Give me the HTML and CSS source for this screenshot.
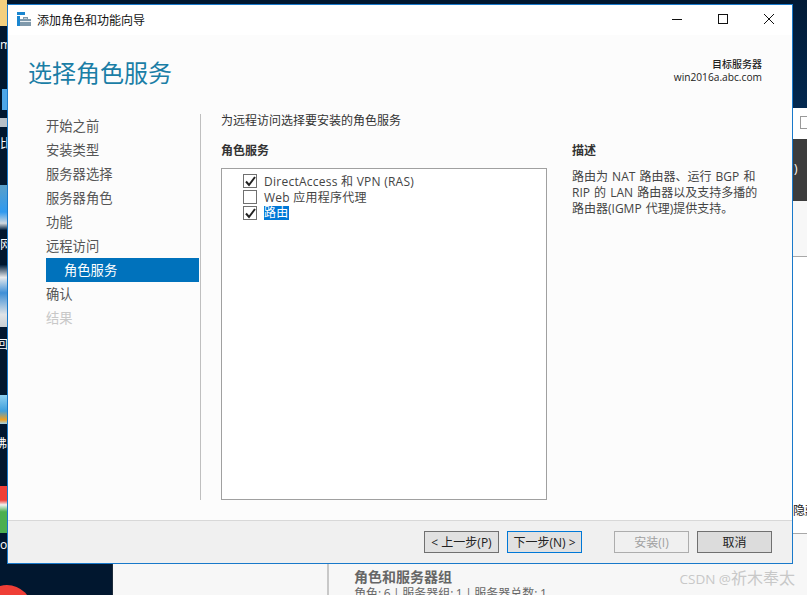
FILE: index.html
```html
<!DOCTYPE html>
<html lang="zh-CN">
<head>
    <meta charset="UTF-8">
    <title>添加角色和功能向导</title>
    <link rel="stylesheet" href="styles.css">
</head>
<body>
    <div class="desktop">
        <div class="d-yellow"></div>
        <div class="d-sky"></div>
        <div class="d-label d-m">m</div>
        <div class="d-folder"></div>
        <div class="d-stripe"></div>
        <div class="d-label d-bi">比</div>
        <div class="d-globe"></div>
        <div class="d-label d-wang">网</div>
        <div class="d-cloud"></div>
        <div class="d-label d-hui">回</div>
        <div class="d-app"></div>
        <div class="d-label d-fu">沸</div>
        <div class="d-chrome"></div>
        <div class="d-label d-o">o</div>
        <div class="d-red"></div>
    </div>

    <div class="back-window">
        <div class="back-top">
            <span class="back-check"></span>
        </div>
        <div class="back-dark"><span class="back-paren">)</span></div>
        <div class="back-light"></div>
        <div class="back-white"><span class="back-hide">隐藏</span></div>
        <div class="back-bottom">
            <div class="back-tile">
                <div class="back-tile-title">角色和服务器组</div>
                <div class="back-tile-sub">角色: 6 | 服务器组: 1 | 服务器总数: 1</div>
            </div>
        </div>
    </div>

    <div class="wizard">
        <div class="titlebar">
            <svg class="app-icon" width="14" height="14" viewBox="0 0 14 14">
                <rect x="0" y="0" width="8" height="3" fill="#1a86d0"/>
                <rect x="0" y="4" width="3" height="10" fill="#1a86d0"/>
                <rect x="3" y="7" width="11" height="7" fill="#7f99ab"/>
                <rect x="3" y="9" width="11" height="1" fill="#e8eef2"/>
                <rect x="6.5" y="5.5" width="4" height="1.5" fill="none" stroke="#7f99ab" stroke-width="1"/>
            </svg>
            <span class="title-text">添加角色和功能向导</span>
            <div class="win-btns">
                <svg width="12" height="12" viewBox="0 0 12 12"><path d="M1 6.5h10" stroke="#111" fill="none"/></svg>
                <svg width="12" height="12" viewBox="0 0 12 12"><rect x="1.5" y="1.5" width="9" height="9" stroke="#111" fill="none"/></svg>
                <svg width="12" height="12" viewBox="0 0 12 12"><path d="M1 1l10 10M11 1L1 11" stroke="#111" fill="none"/></svg>
            </div>
        </div>

        <div class="header">
            <h1 class="page-title">选择角色服务</h1>
            <div class="target">
                <div class="target-label">目标服务器</div>
                <div>win2016a.abc.com</div>
            </div>
        </div>

        <div class="main">
            <ul class="steps">
                <li>开始之前</li>
                <li>安装类型</li>
                <li>服务器选择</li>
                <li>服务器角色</li>
                <li>功能</li>
                <li>远程访问</li>
                <li class="current">角色服务</li>
                <li>确认</li>
                <li class="off">结果</li>
            </ul>

            <div class="content">
                <p class="intro">为远程访问选择要安装的角色服务</p>
                <div class="columns">
                    <div class="roles">
                        <div class="col-title">角色服务</div>
                        <div class="role-list">
                            <div class="role-row">
                                <span class="check">
                                    <svg width="11" height="11" viewBox="0 0 11 11"><path d="M1 5.5l3 3.5 6-8" stroke="#222" stroke-width="2" fill="none"/></svg>
                                </span>
                                <span>DirectAccess 和 VPN (RAS)</span>
                            </div>
                            <div class="role-row">
                                <span class="check"></span>
                                <span>Web 应用程序代理</span>
                            </div>
                            <div class="role-row">
                                <span class="check">
                                    <svg width="11" height="11" viewBox="0 0 11 11"><path d="M1 5.5l3 3.5 6-8" stroke="#222" stroke-width="2" fill="none"/></svg>
                                </span>
                                <span class="role-picked">路由</span>
                            </div>
                        </div>
                    </div>
                    <div class="desc">
                        <div class="col-title">描述</div>
                        <p class="desc-text">路由为 NAT 路由器、运行 BGP 和<br>RIP 的 LAN 路由器以及支持多播的<br>路由器(IGMP 代理)提供支持。</p>
                    </div>
                </div>
            </div>
        </div>

        <div class="footer">
            <button class="btn">&lt; 上一步(P)</button>
            <button class="btn btn-next">下一步(N) &gt;</button>
            <button class="btn btn-off">安装(I)</button>
            <button class="btn btn-cancel">取消</button>
        </div>
    </div>

    <div class="watermark">CSDN @<span class="watermark-name">祈木奉太</span></div>
</body>
</html>
```

FILE: styles.css
```css
html, body {
    margin: 0;
    height: 100%;
    overflow: hidden;
}
body {
    position: relative;
    background: #01172f;
    font-family: "Open Sans", "Noto Sans CJK SC", sans-serif;
    font-size: 12px;
    color: #333;
}

/* desktop bits showing around the wizard */
.desktop {
    position: absolute;
    inset: 0;
    overflow: hidden;
}
.desktop div {
    position: absolute;
}
.d-yellow {
    left: 0;
    top: 0;
    width: 7px;
    height: 26px;
    background: #f3cf7e;
}
.d-sky {
    right: 0;
    top: 0;
    width: 14px;
    height: 108px;
    background: linear-gradient(#011a36, #02284f);
}
.d-label {
    left: 0;
    width: 8px;
    overflow: hidden;
    color: #fff;
    font-size: 12px;
    line-height: 14px;
}
.d-m { top: 38px; }
.d-bi { top: 137px; }
.d-wang { top: 238px; }
.d-hui { top: 338px; text-indent: -4px; }
.d-fu { top: 437px; text-indent: -5px; }
.d-o { top: 538px; }
.d-folder {
    left: 2px;
    top: 89px;
    width: 5px;
    height: 21px;
    background: #4ea6e8;
}
.d-stripe {
    left: 0;
    top: 118px;
    width: 7px;
    height: 9px;
    background: #b8c0c8;
}
.d-globe {
    left: 0;
    top: 185px;
    width: 7px;
    height: 45px;
    background: linear-gradient(#5b9fc8, #2f9af0 60%, #d0d8de 85%, #02203e);
}
.d-cloud {
    left: 0;
    top: 265px;
    width: 7px;
    height: 62px;
    background: linear-gradient(#02203e, #e8eaec 20%, #3f8fd6 45%, #dfe3e6 80%, #c9ced2);
}
.d-app {
    left: 0;
    top: 395px;
    width: 7px;
    height: 29px;
    background: linear-gradient(#8fd0f0, #3f9fdc 55%, #f0a020 85%, #9fd3ef);
}
.d-chrome {
    left: 0;
    top: 486px;
    width: 7px;
    height: 47px;
    background: linear-gradient(#ef3e36 30%, #f2f2f2 40%, #4caf50 55%);
}
.d-red {
    left: -18px;
    top: 585px;
    width: 50px;
    height: 50px;
    border-radius: 50%;
    background: #ef3e36;
}

/* server manager window behind */
.back-window {
    position: absolute;
    left: 112px;
    top: 108px;
    width: 695px;
    height: 487px;
    overflow: hidden;
    background: #f7f7f7;
    display: flex;
    flex-direction: column;
    border-left: 1px solid #1d2b3a;
    box-sizing: border-box;
}
.back-top {
    height: 31px;
    background: #fff;
    flex: none;
    position: relative;
}
.back-check {
    position: absolute;
    right: -2px;
    top: 8px;
    width: 7px;
    height: 11px;
    border: 1px solid #999;
}
.back-dark {
    height: 62px;
    flex: none;
    background: #3c3c3c;
    position: relative;
}
.back-paren {
    position: absolute;
    left: 681px;
    top: 23px;
    color: #fff;
    font-size: 12px;
    line-height: 14px;
}
.back-light {
    height: 55px;
    flex: none;
    background: #f7f7f7;
    border-bottom: 1px solid #a8a8a8;
}
.back-white {
    height: 276px;
    flex: none;
    background: #fff;
    border-bottom: 1px solid #a8a8a8;
    position: relative;
}
.back-hide {
    position: absolute;
    left: 680px;
    top: 244px;
    color: #222;
    white-space: nowrap;
}
.back-bottom {
    flex: 1;
    background: #f7f7f7;
    padding-left: 214px;
}
.back-tile {
    height: 100%;
    border-left: 2px solid #c8c8c8;
    padding: 34px 0 0 25px;
    color: #666;
    line-height: 15px;
    word-spacing: -0.6px;
}
.back-tile-title {
    font-size: 14px;
    font-weight: bold;
    line-height: 18px;
}

/* wizard */
.wizard {
    position: absolute;
    left: 7px;
    top: 4px;
    width: 786px;
    height: 560px;
    box-sizing: border-box;
    border: 1px solid #1979ca;
    background: #fcfcfc;
    display: flex;
    flex-direction: column;
}
.titlebar {
    height: 30px;
    flex: none;
    box-sizing: border-box;
    background: #fff;
    display: flex;
    align-items: center;
    padding: 0 0 2px 9px;
    color: #111;
}
.app-icon {
    margin-right: 6px;
}
.title-text {
    font-family: "Noto Sans CJK SC", sans-serif;
}
.win-btns {
    margin-left: auto;
    padding-right: 17px;
    display: flex;
    gap: 34px;
}
.header {
    height: 73px;
    flex: none;
    display: flex;
    justify-content: space-between;
    align-items: flex-start;
    padding: 0 30px 0 20px;
}
.page-title {
    margin: 19px 0 0;
    font-size: 24px;
    font-weight: normal;
    line-height: 36px;
    color: #1a7ea6;
    font-family: "Noto Sans CJK SC", sans-serif;
}
.target {
    margin-top: 23px;
    text-align: right;
    font-size: 10.2px;
    line-height: 13px;
    color: #222;
}
.target-label {
    font-size: 10px;
    font-weight: 500;
}
.main {
    flex: 1;
    display: flex;
    min-height: 0;
    padding-top: 6px;
}
.steps {
    list-style: none;
    margin: 0 0 0 38px;
    padding: 0;
    width: 153px;
    font-size: 13.3px;
    color: #555;
    box-sizing: border-box;
}
.steps li {
    height: 24px;
    line-height: 24px;
}
.steps .current {
    background: #0072bc;
    color: #fff;
    padding-left: 18px;
}
.steps .off {
    color: #c8c8c8;
}
.content {
    flex: 1;
    margin: 0 0 20px 1px;
    border-left: 1px solid #bfbfbf;
    padding-left: 20px;
    display: flex;
    flex-direction: column;
    min-height: 0;
}
.intro {
    margin: 0 0 1px;
    line-height: 14px;
    color: #333;
}
.columns {
    flex: 1;
    display: flex;
    margin-top: 14px;
    min-height: 0;
}
.roles {
    width: 326px;
    display: flex;
    flex-direction: column;
}
.col-title {
    font-weight: bold;
    line-height: 15px;
    color: #333;
}
.role-list {
    flex: 1;
    margin-top: 10px;
    border: 1px solid #a0a0a0;
    background: #fff;
    padding-top: 4px;
    box-sizing: border-box;
}
.role-row {
    display: flex;
    align-items: center;
    height: 16px;
    padding-left: 21px;
    font-size: 12px;
    letter-spacing: 0.25px;
    color: #444;
}
.check {
    width: 12px;
    height: 12px;
    border: 1px solid #707070;
    background: #fff;
    margin-right: 7px;
    display: flex;
    align-items: center;
    justify-content: center;
    flex: none;
}
.role-picked {
    background: #0078d7;
    color: #fff;
    line-height: 14px;
}
.desc {
    margin-left: 25px;
    flex: 1;
}
.desc-text {
    margin: 11px 0 0;
    line-height: 16px;
    color: #444;
    word-spacing: 1px;
}
.footer {
    height: 43px;
    flex: none;
    box-sizing: border-box;
    background: #f0f0f0;
    border-top: 1px solid #d8d8d8;
    display: flex;
    align-items: center;
    padding: 0 20px 0 416px;
}
.btn {
    width: 75px;
    height: 22px;
    box-sizing: border-box;
    border: 1px solid #707070;
    background: #e1e1e1;
    color: #222;
    font: inherit;
    padding: 0;
    margin-right: 8px;
}
.btn-next {
    border-color: #0078d7;
    border-width: 1px;
    margin-right: 32px;
}
.btn-off {
    background: #f0f0f0;
    border-color: #adadad;
    color: #a0a0a0;
}
.btn-cancel {
    margin-right: 0;
    background: #dcdcdc;
}
.watermark {
    position: absolute;
    right: 12px;
    bottom: 6px;
    color: #c8c8c8;
    font-size: 13.5px;
    line-height: 20px;
    white-space: nowrap;
}
.watermark-name {
    font-size: 16px;
}
```
